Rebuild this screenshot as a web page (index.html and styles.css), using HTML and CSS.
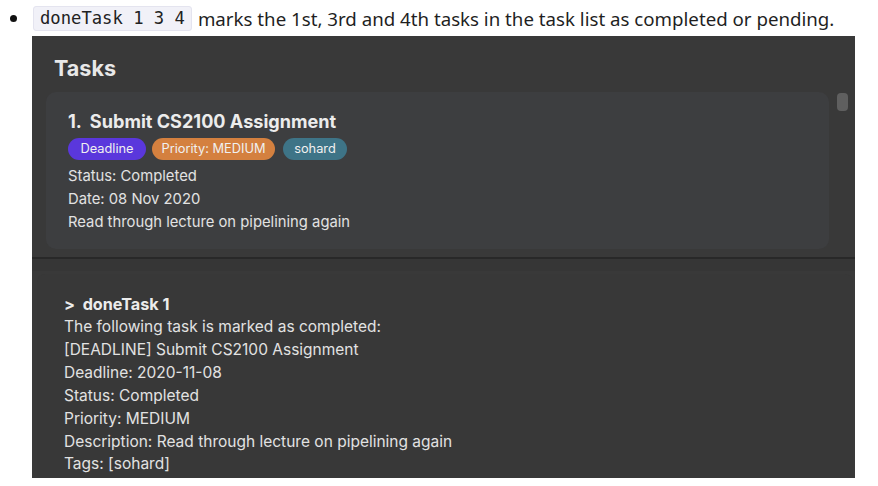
FILE: index.html
```html
<!DOCTYPE html>
<html>
<head>
<meta charset="utf-8">
<link rel="stylesheet" href="styles.css">
</head>
<body>
<div class="doc">
  <div class="bullet-line">
    <span class="dot-cell"><span class="dot"></span></span>
    <code class="code">doneTask 1 3 4</code>
    <span class="desc">marks the 1st, 3rd and 4th tasks in the task list as completed or pending.</span>
  </div>
  <div class="app">
    <div class="tasks-section">
      <div class="tasks-title">Tasks</div>
      <div class="list-row">
        <div class="card">
          <div class="card-title"><span class="num">1.</span>Submit CS2100 Assignment</div>
          <div class="tags">
            <span class="tag tag-deadline">Deadline</span>
            <span class="tag tag-priority">Priority: MEDIUM</span>
            <span class="tag tag-sohard">sohard</span>
          </div>
          <div class="card-line">Status: Completed</div>
          <div class="card-line">Date: 08 Nov 2020</div>
          <div class="card-line">Read through lecture on pipelining again</div>
        </div>
        <div class="scroll">
          <div class="thumb"></div>
        </div>
      </div>
    </div>
    <div class="divider"></div>
    <div class="band"></div>
    <div class="result">
      <div class="cmd">&gt;&nbsp; doneTask 1</div>
      <div class="res-line">The following task is marked as completed:</div>
      <div class="res-line">[DEADLINE] Submit CS2100 Assignment</div>
      <div class="res-line">Deadline: 2020-11-08</div>
      <div class="res-line">Status: Completed</div>
      <div class="res-line">Priority: MEDIUM</div>
      <div class="res-line">Description: Read through lecture on pipelining again</div>
      <div class="res-line">Tags: [sohard]</div>
    </div>
  </div>
</div>
</body>
</html>
```
FILE: styles.css
```css
html, body {
  margin: 0;
  padding: 0;
  background: #ffffff;
}
.doc {
  width: 878px;
  height: 486px;
  overflow: hidden;
}
.bullet-line {
  display: flex;
  align-items: center;
  height: 36px;
  font-family: "Noto Sans", "Open Sans", sans-serif;
  font-size: 18.7px;
  color: #1f1f1f;
}
.dot-cell {
  width: 33px;
  display: flex;
  padding-left: 10px;
  box-sizing: border-box;
}
.dot {
  width: 7px;
  height: 7px;
  border-radius: 50%;
  background: #111;
}
.code {
  font-family: "DejaVu Sans Mono", monospace;
  font-size: 17.2px;
  background: #f1f1f8;
  border: 1px solid #e4e4ef;
  border-radius: 3px;
  padding: 1px 6px;
  line-height: 21px;
  color: #222;
  white-space: pre;
}
.desc {
  margin-left: 6px;
}
.app {
  margin-left: 32px;
  width: 823px;
  height: 442px;
  background: #393939;
  font-family: "Inter", sans-serif;
  color: #e4e4e4;
  display: flex;
  flex-direction: column;
}
.tasks-section {
  padding-top: 19px;
}
.tasks-title {
  font-weight: 700;
  font-size: 21.6px;
  padding-left: 22px;
  line-height: 26px;
  height: 37px;
  color: #e8e8e8;
}
.list-row {
  display: flex;
  padding-left: 14px;
}
.card {
  width: 783px;
  height: 157px;
  box-sizing: border-box;
  background: #3d3e40;
  border-radius: 10px;
  padding: 17px 22px 0 22px;
}
.card-title {
  font-weight: 700;
  font-size: 18.1px;
  line-height: 24px;
  color: #ececec;
}
.num {
  margin-right: 8px;
}
.tags {
  display: flex;
  margin-top: 5px;
  margin-bottom: 5px;
}
.tag {
  font-size: 12.8px;
  line-height: 22px;
  height: 22px;
  border-radius: 11px;
  color: #f0f0f0;
  text-align: center;
}
.tag-deadline { background: #5a37dc; width: 78px; margin-right: 6px; }
.tag-priority { background: #d4803f; width: 123px; margin-right: 8px; }
.tag-sohard { background: #3e7487; width: 64px; }
.card-line {
  font-size: 14.8px;
  line-height: 23px;
  color: #e2e2e2;
}
.scroll {
  width: 26px;
  display: flex;
  justify-content: center;
}
.thumb {
  margin-top: 1px;
  width: 11px;
  height: 18px;
  border-radius: 4px;
  background: #5f5f5f;
}
.divider {
  margin-top: 8px;
  height: 2px;
  background: #282828;
}
.band {
  height: 12px;
  background: #363636;
}
.result {
  flex: 1;
  margin-left: 5px;
  margin-right: 2px;
  margin-top: 3px;
  background: #383838;
  border-radius: 8px 8px 0 0;
  padding: 19px 0 0 27px;
}
.cmd {
  font-weight: 700;
  font-size: 16.2px;
  line-height: 23px;
  color: #ececec;
}
.res-line {
  font-size: 15.5px;
  line-height: 22.9px;
  color: #e2e2e2;
}
```
